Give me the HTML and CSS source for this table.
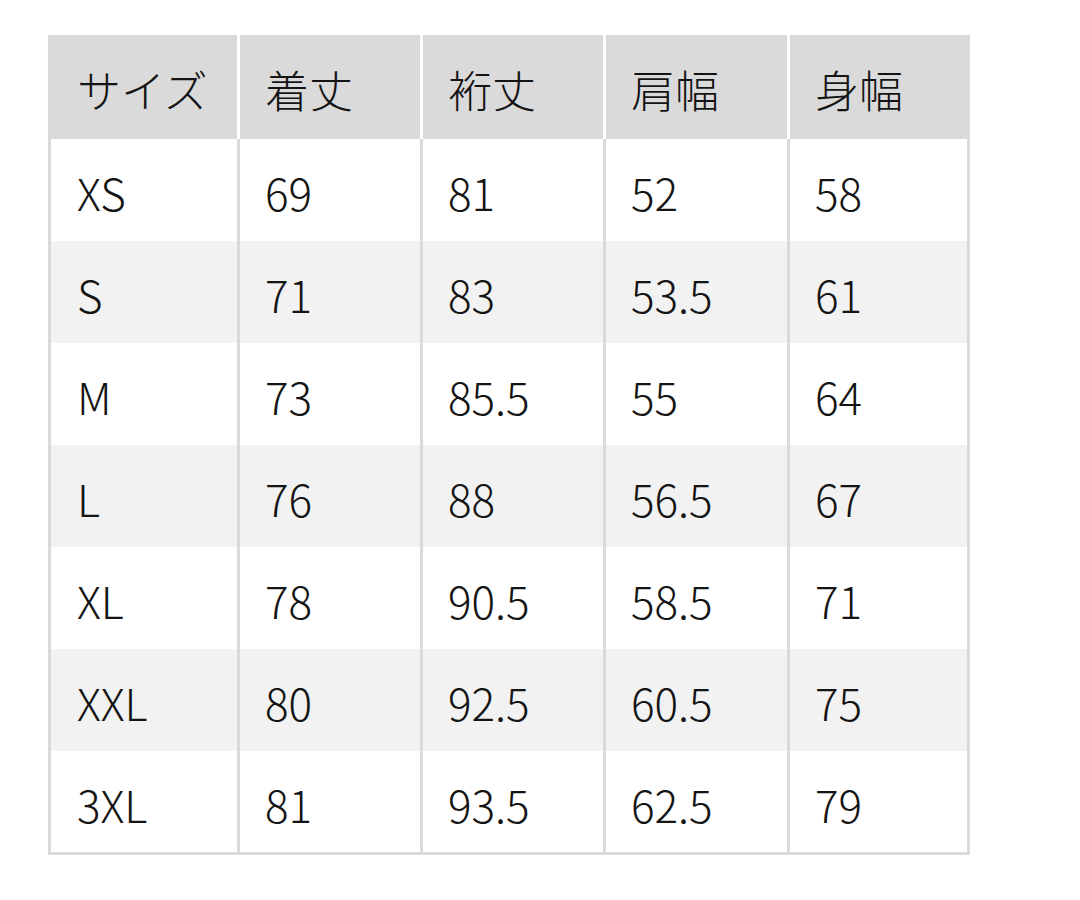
FILE: index.html
```html
<!DOCTYPE html>
<html lang="ja">
<head>
<meta charset="utf-8">
<link rel="stylesheet" href="styles.css">
</head>
<body>
<div class="wrap">
<table class="size">
<colgroup>
<col class="c1"><col class="c2"><col class="c3"><col class="c4"><col class="c5">
</colgroup>
<thead>
<tr><th>サイズ</th><th>着丈</th><th>裄丈</th><th>肩幅</th><th>身幅</th></tr>
</thead>
<tbody>
<tr><td>XS</td><td>69</td><td>81</td><td>52</td><td>58</td></tr>
<tr><td>S</td><td>71</td><td>83</td><td>53.5</td><td>61</td></tr>
<tr><td>M</td><td>73</td><td>85.5</td><td>55</td><td>64</td></tr>
<tr><td>L</td><td>76</td><td>88</td><td>56.5</td><td>67</td></tr>
<tr><td>XL</td><td>78</td><td>90.5</td><td>58.5</td><td>71</td></tr>
<tr><td>XXL</td><td>80</td><td>92.5</td><td>60.5</td><td>75</td></tr>
<tr><td>3XL</td><td>81</td><td>93.5</td><td>62.5</td><td>79</td></tr>
</tbody>
</table>
</div>
</body>
</html>
```

FILE: styles.css
```css
html, body {
  margin: 0;
  padding: 0;
  background: #ffffff;
}
.wrap {
  padding: 35px 0 0 48px;
}
.size {
  border-collapse: separate;
  border-spacing: 0;
  table-layout: fixed;
  width: 922px;
  font-family: "Noto Sans CJK JP", sans-serif;
  font-weight: 300;
  font-size: 44px;
  color: #141414;
}
.c1 { width: 189px; }
.c2 { width: 183px; }
.c3 { width: 183px; }
.c4 { width: 184px; }
.c5 { width: 183px; }
.size th {
  height: 104px;
  box-sizing: border-box;
  background: #dadada;
  font-weight: 300;
  text-align: left;
  padding: 4px 0 0 25px;
  border-left: 3px solid #ffffff;
}
.size th:first-child {
  border-left: 0;
  padding-left: 29px;
}
.size td {
  height: 102px;
  box-sizing: border-box;
  padding: 4px 0 0 25px;
  border-left: 3px solid #dadada;
}
.size td:first-child {
  padding-left: 26px;
}
.size td:last-child {
  border-right: 3px solid #dadada;
}
.size tbody tr:nth-child(even) td {
  background: #f2f2f2;
}
.size tbody tr:last-child td {
  border-bottom: 3px solid #dadada;
  height: 104px;
}
```
